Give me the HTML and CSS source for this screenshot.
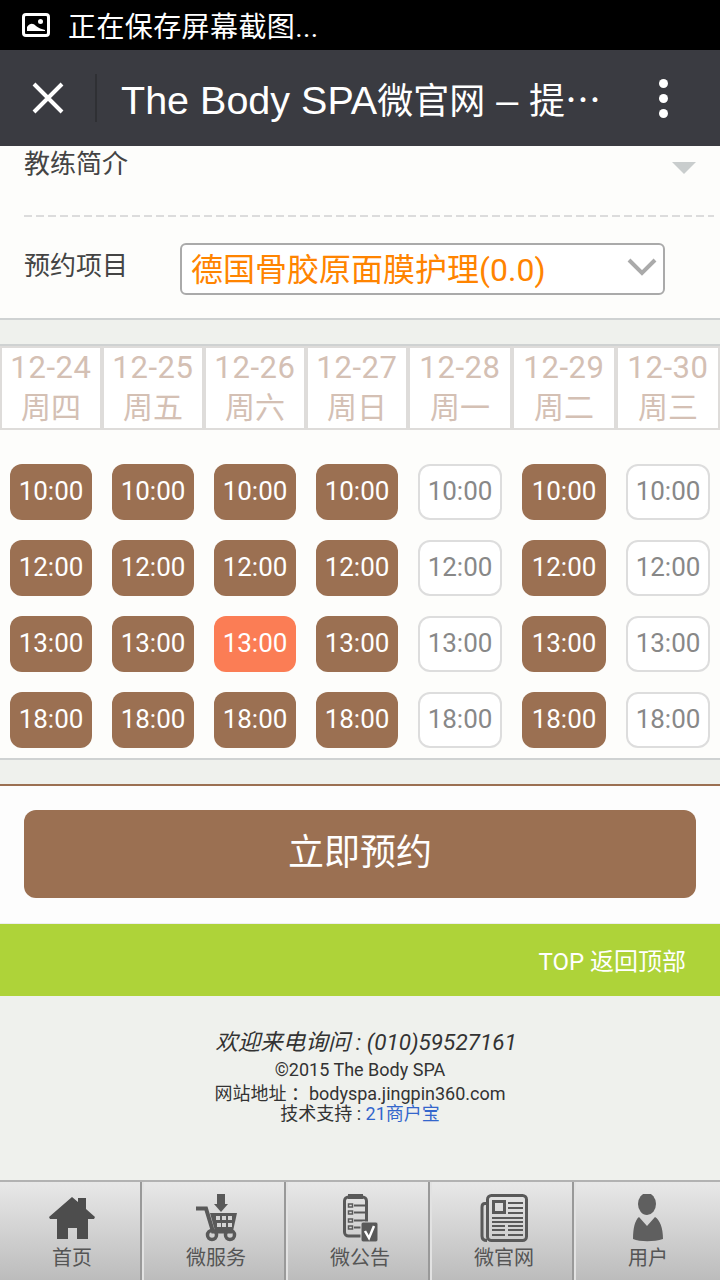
FILE: index.html
```html
<!DOCTYPE html>
<html lang="zh-CN">
<head>
    <meta charset="UTF-8">
    <meta name="viewport" content="width=device-width, initial-scale=1.0">
    <title>The Body SPA</title>
    <link rel="stylesheet" href="styles.css">
</head>
<body>
    <!-- Android status bar -->
    <div class="status-bar">
        <svg class="status-icon" viewBox="0 0 28 24" width="28" height="24">
            <rect x="1.5" y="1.5" width="25" height="21" rx="2.5" fill="none" stroke="#fff" stroke-width="3"/>
            <path d="M5 18 V14 C8 10 11 10 14 13 C16 15 20 16 23 17 V18 Z" fill="#fff"/>
            <circle cx="18.5" cy="8.5" r="2.5" fill="#fff"/>
        </svg>
        <span>正在保存屏幕截图...</span>
    </div>

    <!-- Browser title bar -->
    <header class="nav-bar">
        <svg class="nav-close" viewBox="0 0 32 32" width="32" height="32">
            <path d="M2 2 L30 30 M30 2 L2 30" stroke="#fff" stroke-width="4" fill="none"/>
        </svg>
        <div class="nav-divider"></div>
        <h1 class="nav-title">The Body SPA<span>微官网</span> – <span>提⋯</span></h1>
        <div class="nav-more"><i></i><i></i><i></i></div>
    </header>

    <section class="form-panel">
        <div class="form-row coach-row">
            <span class="form-label">教练简介</span>
            <span class="triangle"></span>
        </div>
        <div class="dashed"></div>
        <div class="form-row item-row">
            <span class="form-label">预约项目</span>
            <div class="select-box">
                <span>德国骨胶原面膜护理(0.0)</span>
                <svg viewBox="0 0 30 18" width="30" height="18">
                    <path d="M2 2 L15 15 L28 2" stroke="#aaa" stroke-width="4" fill="none"/>
                </svg>
            </div>
        </div>
    </section>

    <section class="schedule">
        <div class="dates">
            <div class="date">12-24<span>周四</span></div>
            <div class="date">12-25<span>周五</span></div>
            <div class="date">12-26<span>周六</span></div>
            <div class="date">12-27<span>周日</span></div>
            <div class="date">12-28<span>周一</span></div>
            <div class="date">12-29<span>周二</span></div>
            <div class="date">12-30<span>周三</span></div>
        </div>
        <div class="slots">
            <a class="slot">10:00</a><a class="slot">10:00</a><a class="slot">10:00</a><a class="slot">10:00</a><a class="slot off">10:00</a><a class="slot">10:00</a><a class="slot off">10:00</a>
            <a class="slot">12:00</a><a class="slot">12:00</a><a class="slot">12:00</a><a class="slot">12:00</a><a class="slot off">12:00</a><a class="slot">12:00</a><a class="slot off">12:00</a>
            <a class="slot">13:00</a><a class="slot">13:00</a><a class="slot on">13:00</a><a class="slot">13:00</a><a class="slot off">13:00</a><a class="slot">13:00</a><a class="slot off">13:00</a>
            <a class="slot">18:00</a><a class="slot">18:00</a><a class="slot">18:00</a><a class="slot">18:00</a><a class="slot off">18:00</a><a class="slot">18:00</a><a class="slot off">18:00</a>
        </div>
    </section>

    <section class="submit-panel">
        <button class="submit-btn">立即预约</button>
    </section>

    <div class="to-top">TOP 返回顶部</div>

    <footer class="site-info">
        <p class="phone">欢迎来电询问 : (010)59527161</p>
        <p>©2015 The Body SPA</p>
        <p>网站地址 <span class="colon">：</span>bodyspa.jingpin360.com</p>
        <p>技术支持 : <a>21商户宝</a></p>
    </footer>

    <!-- Bottom tabs -->
    <nav class="tab-bar">
        <a class="tab">
            <svg viewBox="0 0 48 48" width="48" height="48">
                <path d="M24 3 L30 8 V4 H38 V15 L47 23 L46 25 H40 V45 H29 V34 H20 V45 H9 V25 H2 L1 23 Z" fill="#4d4d4d"/>
            </svg>
            <span>首页</span>
        </a>
        <a class="tab">
            <svg viewBox="0 0 48 48" width="48" height="48">
                <path d="M25 0 H33 V10 H36 L29 18 L22 10 H25 Z" fill="#595959"/>
                <path d="M4 14.500 H14 L21 37.500 H40" stroke="#595959" stroke-width="4" fill="none"/>
                <path d="M18 19 H45 L41 37 H23 Z" fill="#595959"/>
                <path d="M24 22 h4 v4 h-4 z M30 22 h4 v4 h-4 z M36 22 h4 v4 h-4 z M25 29 h4 v4 h-4 z M30 29 h4 v4 h-4 z M36 29 h4 v4 h-4 z" fill="#d4d4d4"/>
                <circle cx="20" cy="41" r="4.500" fill="none" stroke="#595959" stroke-width="3.500"/>
                <circle cx="38" cy="41" r="4.500" fill="none" stroke="#595959" stroke-width="3.500"/>
            </svg>
            <span>微服务</span>
        </a>
        <a class="tab">
            <svg viewBox="0 0 48 48" width="48" height="48">
                <rect x="8.500" y="3" width="22" height="39" rx="4" fill="none" stroke="#595959" stroke-width="3"/>
                <path d="M12 0 H27 V5 H12 Z" fill="#595959"/>
                <path d="M12.500 10 h4 v3 h-4 z M12.500 17 h4 v3 h-4 z M12.500 25 h4 v3 h-4 z M12.500 32 h4 v3 h-4 z" fill="none" stroke="#595959" stroke-width="1.500"/>
                <path d="M18 11.500 H29 M18 18.500 H29 M18 26.500 H29 M18 33.500 H26" stroke="#595959" stroke-width="2"/>
                <rect x="25" y="28" width="17" height="20" rx="2" fill="#595959" stroke="#d6d6d6" stroke-width="1"/>
                <path d="M29 37 L33 44 L38 32" stroke="#fff" stroke-width="2.500" fill="none"/>
            </svg>
            <span>微公告</span>
        </a>
        <a class="tab">
            <svg viewBox="0 0 48 48" width="48" height="48">
                <path d="M7 9.500 H5 C3 9.500 2 11 2 13 V42 C2 45 4 46.500 7 46.500" fill="none" stroke="#595959" stroke-width="3"/>
                <rect x="7.500" y="1.500" width="39" height="45" rx="4" fill="none" stroke="#595959" stroke-width="3"/>
                <rect x="13.500" y="7.500" width="11" height="11" fill="none" stroke="#595959" stroke-width="3"/>
                <path d="M28 9 H43 M28 14 H43 M28 19 H43 M12 24 H43 M12 28 H43 M12 32 H25 M28 32 H43 M12 36 H25 M28 36 H43 M12 41 H25 M28 41 H43" stroke="#595959" stroke-width="2"/>
            </svg>
            <span>微官网</span>
        </a>
        <a class="tab">
            <svg viewBox="0 0 48 48" width="48" height="48">
                <ellipse cx="23" cy="10" rx="9" ry="11" fill="#5f5f5f"/>
                <path d="M15 23 L23 32 L31 23 C36 26 39 34 39 45 C30 48 16 48 9 45 C9 34 11 26 15 23 Z" fill="#5f5f5f"/>
            </svg>
            <span>用户</span>
        </a>
    </nav>
</body>
</html>
```

FILE: styles.css
```css
* {
    box-sizing: border-box;
}
html, body {
    margin: 0;
    padding: 0;
}
body {
    width: 720px;
    height: 1280px;
    overflow: hidden;
    font-family: Roboto, "Noto Sans CJK SC", sans-serif;
    background-color: #eff1ed;
    color: #333;
}
p {
    margin: 0;
}

.status-bar {
    height: 50px;
    background-color: #000;
    color: #fff;
    display: flex;
    align-items: center;
    padding-left: 22px;
    font-size: 28px;
    letter-spacing: 0.4px;
}
.status-icon {
    margin-right: 18px;
}

.nav-bar {
    height: 96px;
    background-color: #3a3b41;
    display: flex;
    align-items: center;
    color: #fff;
}
.nav-close {
    margin-left: 32px;
}
.nav-divider {
    width: 2px;
    height: 48px;
    margin-left: 31px;
    background-color: #2f3034;
}
.nav-title {
    margin: 0 0 0 24px;
    width: 490px;
    font-family: "Liberation Sans", "Noto Sans CJK SC", sans-serif;
    font-size: 39.5px;
    font-weight: normal;
    white-space: nowrap;
}
.nav-title span {
    font-size: 36px;
}
.nav-more {
    margin-left: 48px;
    display: flex;
    flex-direction: column;
    gap: 6px;
}
.nav-more i {
    width: 9px;
    height: 9px;
    border-radius: 50%;
    background-color: #fff;
}

.form-panel {
    height: 174px;
    background-color: #fdfdfb;
    border-bottom: 2px solid #cfd2d2;
}
.form-row {
    display: flex;
    padding-left: 24px;
}
.form-label {
    font-size: 26px;
    line-height: 36px;
    color: #444;
}
.coach-row {
    height: 69px;
    justify-content: space-between;
    padding-right: 24px;
}
.triangle {
    width: 0;
    height: 0;
    margin-top: 16px;
    border-left: 12px solid transparent;
    border-right: 12px solid transparent;
    border-top: 12px solid #c9cdcd;
}
.dashed {
    height: 2px;
    margin: 0 6px 0 24px;
    background: repeating-linear-gradient(90deg, #dcdcdc 0, #dcdcdc 8px, transparent 8px, transparent 12px);
}
.item-row {
    padding-top: 26px;
    align-items: flex-start;
}
.item-row .form-label {
    padding-top: 5px;
}
.select-box {
    width: 485px;
    height: 52px;
    margin-left: 52px;
    border: 2px solid #aaa;
    border-radius: 6px;
    background-color: #fff;
    display: flex;
    align-items: center;
    justify-content: space-between;
    padding: 0 6px 4px 9px;
    font-size: 32px;
    color: #ff8400;
}

.schedule {
    margin-top: 24px;
    background-color: #fdfdfb;
    border-top: 2px solid #cfd2d2;
    border-bottom: 2px solid #cfd2d2;
    height: 416px;
}
.dates, .slots {
    display: grid;
    grid-template-columns: 102px 102px 102px 102px 104px 104px 104px;
}
.date {
    height: 84px;
    background-color: #fff;
    border: 2px solid #dedcda;
    text-align: center;
    font-size: 31px;
    line-height: 40px;
    letter-spacing: 0.6px;
    color: #d4c0b4;
}
.date span {
    display: block;
    font-size: 30px;
    letter-spacing: 0;
}
.slots {
    padding-top: 34px;
    row-gap: 20px;
}
.slot {
    height: 56px;
    margin: 0 10px;
    border-radius: 12px;
    background-color: #9b7052;
    color: #fff;
    font-size: 26px;
    line-height: 55px;
    text-align: center;
}
.slot.on {
    background-color: #fb7d55;
}
.slot.off {
    background-color: #fff;
    border: 2px solid #dddddd;
    color: #888;
    line-height: 51px;
}

.submit-panel {
    margin-top: 24px;
    height: 140px;
    padding: 24px 24px 0;
    background-color: #fdfdfd;
    border-top: 2px solid #9b7052;
    border-bottom: 1px solid #eeeeee;
}
.submit-btn {
    display: block;
    width: 100%;
    height: 88px;
    padding: 0 0 10px;
    border: none;
    border-radius: 12px;
    background-color: #9b7052;
    color: #fff;
    font-family: inherit;
    font-size: 36px;
}

.to-top {
    height: 72px;
    background-color: #aed339;
    color: #fff;
    font-size: 24px;
    line-height: 76px;
    text-align: right;
    padding-right: 34px;
}

.site-info {
    height: 184px;
    padding-top: 34px;
    text-align: center;
    font-size: 18px;
    line-height: 22px;
    color: #333;
}
.site-info p {
    height: 22px;
}
.site-info .phone {
    height: 24px;
    padding-left: 12px;
    font-size: 22.5px;
    font-style: italic;
    line-height: 24px;
    margin-bottom: 5px;
}
.site-info .colon {
    font-family: "Noto Sans CJK TC", sans-serif;
}
.site-info a {
    color: #3366cc;
}

.tab-bar {
    height: 100px;
    display: flex;
    border-top: 2px solid #b2b2b2;
}
.tab {
    width: 144px;
    height: 98px;
    padding-top: 12px;
    display: flex;
    flex-direction: column;
    align-items: center;
    background: linear-gradient(#e8e8e8, #bcbcbc);
    box-shadow: inset -2px 0 #e2e2e2, inset -4px 0 #999;
    color: #555;
    font-size: 20px;
    line-height: 28px;
}
.tab span {
    margin-top: 2px;
}
.tab:last-child {
    box-shadow: none;
}
```
